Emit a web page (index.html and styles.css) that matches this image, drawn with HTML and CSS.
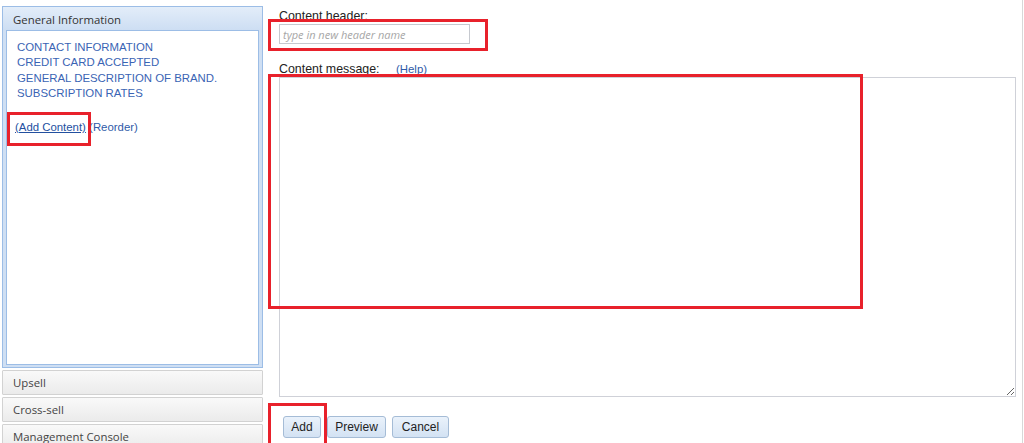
FILE: index.html
```html
<!DOCTYPE html>
<html>
<head>
<meta charset="utf-8">
<link rel="stylesheet" href="styles.css">
</head>
<body>
<div class="page">
  <aside class="accordion">
    <div class="acc-active">
      <div class="acc-head-active">General Information</div>
      <div class="acc-body">
        <ul class="content-list">
          <li>CONTACT INFORMATION</li>
          <li>CREDIT CARD ACCEPTED</li>
          <li>GENERAL DESCRIPTION OF BRAND.</li>
          <li>SUBSCRIPTION RATES</li>
        </ul>
        <div class="actions"><a class="add-link">(Add Content)</a> <span class="reorder">(Reorder)</span></div>
      </div>
    </div>
    <div class="acc-item">Upsell</div>
    <div class="acc-item">Cross-sell</div>
    <div class="acc-item">Management Console</div>
  </aside>
  <main class="editor">
    <div class="label label-header">Content header:</div>
    <input class="header-input" type="text" placeholder="type in new header name">
    <div class="label label-message">Content message: <span class="help">(Help)</span></div>
    <textarea class="message"></textarea>
    <div class="buttons">
      <button class="btn btn-add">Add</button>
      <button class="btn btn-preview">Preview</button>
      <button class="btn btn-cancel">Cancel</button>
    </div>
  </main>
  <div class="mark mark-header"></div>
  <div class="mark mark-message"></div>
  <div class="mark mark-addcontent"></div>
  <div class="mark mark-addbtn"></div>
</div>
</body>
</html>
```

FILE: styles.css
```css
html, body {
  margin: 0;
  padding: 0;
  background: #fff;
}
body {
  font-family: "Liberation Sans", Arial, sans-serif;
  font-size: 12px;
  color: #222;
  overflow: hidden;
}
.page {
  position: relative;
  display: flex;
  width: 1022px;
  height: 443px;
  border-right: 1px solid #d8d8d8;
}
.accordion {
  width: 261px;
  margin-left: 2px;
  margin-top: 6px;
  display: flex;
  flex-direction: column;
  gap: 2px;
  flex: none;
}
.acc-active {
  border: 1px solid #9cbde6;
  background: #cfdff3;
  padding: 0 3px 2px 3px;
}
.acc-head-active {
  height: 23px;
  line-height: 25px;
  padding-left: 10px;
  margin: 0 -3px;
  background: linear-gradient(#e3edf9, #cddef3);
  font-family: "Open Sans", sans-serif;
  font-size: 11.4px;
  color: #333;
}
.acc-body {
  background: #fff;
  border: 1px solid #9cbde6;
  height: 335px;
  padding: 9px 0 0 10px;
  box-sizing: border-box;
}
.content-list {
  list-style: none;
  margin: 0;
  padding: 0;
  color: #3a64b4;
  font-size: 11.4px;
  line-height: 15.3px;
}
.actions {
  margin-top: 20px;
  margin-left: -2px;
  color: #2f5aa8;
  font-size: 11.4px;
}
.add-link {
  text-decoration: underline;
  color: #23509f;
}
.acc-item {
  height: 23px;
  line-height: 24px;
  padding-left: 10px;
  border: 1px solid #d2d2d2;
  border-radius: 1px;
  background: linear-gradient(#f9f9f9, #ebebeb);
  font-family: "Open Sans", sans-serif;
  font-size: 11.4px;
  color: #444;
}
.editor {
  margin-left: 16px;
  display: flex;
  flex-direction: column;
  align-items: flex-start;
  padding-top: 9px;
}
.label {
  color: #222;
  line-height: 14px;
  font-size: 12.4px;
}
.header-input {
  margin-top: 1px;
  width: 191px;
  height: 20px;
  box-sizing: border-box;
  border: 1px solid #c6c9cf;
  padding: 0 3px;
  font-family: "Open Sans", sans-serif;
  font-style: italic;
  font-size: 11px;
  outline: none;
}
.header-input::placeholder {
  color: #a6a6a6;
}
.label-message {
  margin-top: 18px;
}
.help {
  color: #2f5aa8;
  margin-left: 13px;
  font-size: 11.4px;
}
.message {
  margin-top: 1px;
  width: 737px;
  height: 320px;
  box-sizing: border-box;
  border: 1px solid #cfd1d8;
  resize: both;
  outline: none;
  margin-bottom: 0;
}
.buttons {
  display: flex;
  gap: 6px;
  margin-top: 19px;
  margin-left: 4px;
}
.btn {
  height: 22px;
  padding: 0 7px;
  border: 1px solid #a5bcd6;
  border-radius: 3px;
  background: linear-gradient(#eaf2fb, #d3e2f3);
  font-family: "Liberation Sans", Arial, sans-serif;
  font-size: 12px;
  color: #222;
}
.btn-add { width: 38px; }
.btn-preview { width: 59px; }
.btn-cancel { width: 57px; }
.mark {
  position: absolute;
  border: 3px solid #e8212b;
  box-sizing: border-box;
}
.mark-header { left: 268px; top: 19px; width: 220px; height: 32px; }
.mark-message { left: 268px; top: 74px; width: 595px; height: 235px; }
.mark-addcontent { left: 7px; top: 112px; width: 84px; height: 34px; }
.mark-addbtn { left: 268px; top: 403px; width: 59px; height: 45px; }
```
